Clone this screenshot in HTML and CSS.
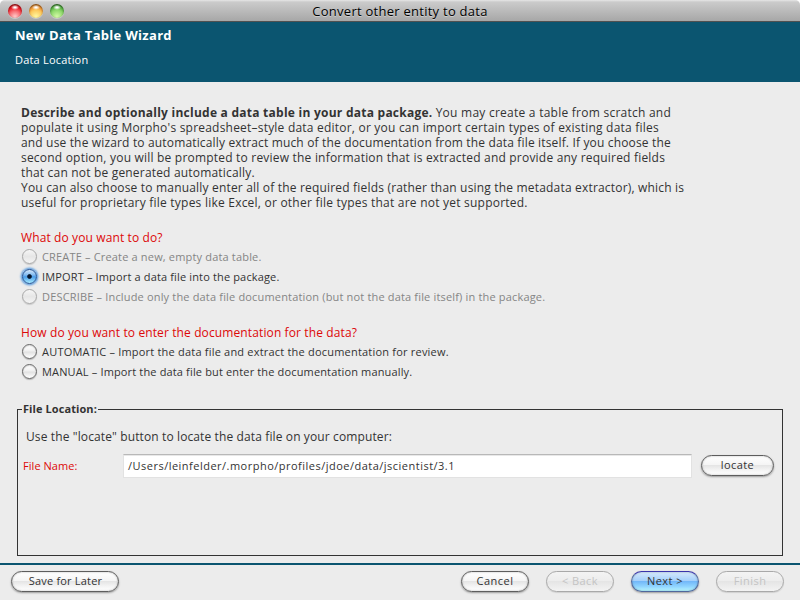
FILE: index.html
```html
<!DOCTYPE html>
<html lang="en">
<head>
<meta charset="utf-8">
<title>Convert other entity to data</title>
<link rel="stylesheet" href="styles.css">
</head>
<body>
<div class="window">
  <div class="titlebar">
    <div class="lights"><span class="light red"></span><span class="light amber"></span><span class="light green"></span></div>
    <div class="title">Convert other entity to data</div>
  </div>
  <header class="banner">
    <h1>New Data Table Wizard</h1>
    <p>Data Location</p>
  </header>
  <main class="content">
    <div class="intro">
      <div><b class="t26">Describe and optionally include a data table in your data package.</b> <span class="t26">You may create a table from scratch and</span></div>
      <div class="t22">populate it using Morpho's spreadsheet–style data editor, or you can import certain types of existing data files</div>
      <div class="t17">and use the wizard to automatically extract much of the documentation from the data file itself. If you choose the</div>
      <div class="t21">second option, you will be prompted to review the information that is extracted and provide any required fields</div>
      <div class="t19">that can not be generated automatically.</div>
      <div class="t19">You can also choose to manually enter all of the required fields (rather than using the metadata extractor), which is</div>
      <div class="t24">useful for proprietary file types like Excel, or other file types that are not yet supported.</div>
    </div>
    <section class="group">
      <h2>What do you want to do?</h2>
      <div class="option off"><span class="radio"></span><span class="t17">CREATE – Create a new, empty data table.</span></div>
      <div class="option"><span class="radio on"></span><span class="t15">IMPORT – Import a data file into the package.</span></div>
      <div class="option off"><span class="radio"></span><span class="t17">DESCRIBE – Include only the data file documentation (but not the data file itself) in the package.</span></div>
    </section>
    <section class="group">
      <h2>How do you want to enter the documentation for the data?</h2>
      <div class="option"><span class="radio"></span><span class="t21">AUTOMATIC – Import the data file and extract the documentation for review.</span></div>
      <div class="option"><span class="radio"></span><span class="t15">MANUAL – Import the data file but enter the documentation manually.</span></div>
    </section>
    <fieldset class="location">
      <legend>File Location:</legend>
      <p class="hint">Use the "locate" button to locate the data file on your computer:</p>
      <div class="file-row">
        <span class="label">File Name:</span>
        <span class="input">/Users/leinfelder/.morpho/profiles/jdoe/data/jscientist/3.1</span>
        <span class="btn locate">locate</span>
      </div>
    </fieldset>
  </main>
  <footer class="footer">
    <span class="btn save">Save for Later</span>
    <span class="btn">Cancel</span>
    <span class="btn disabled">&lt; Back</span>
    <span class="btn primary">Next &gt;</span>
    <span class="btn disabled">Finish</span>
  </footer>
</div>
</body>
</html>
```
FILE: styles.css
```css
* { box-sizing: border-box; }
html { background: #fff; }
body {
  margin: 0;
  font-family: "Open Sans", "Noto Sans", sans-serif;
  font-size: 11px;
  color: #333;
}
h1, h2, p { margin: 0; font-weight: 400; }

.t15 { letter-spacing: 0.15px; }
.t17 { letter-spacing: 0.17px; }
.intro .t17 { letter-spacing: 0.158px; }
.t19 { letter-spacing: 0.184px; }
.t21 { letter-spacing: 0.205px; }
.t22 { letter-spacing: 0.212px; }
.t24 { letter-spacing: 0.225px; }
.t26 { letter-spacing: 0.248px; }

.window {
  width: 800px;
  height: 600px;
  display: flex;
  flex-direction: column;
  background: #ececec;
  border-radius: 5px 5px 0 0;
  overflow: hidden;
  white-space: nowrap;
}

.titlebar {
  height: 22px;
  display: grid;
  grid-template-columns: 1fr auto 1fr;
  align-items: center;
  background: linear-gradient(#e6e6e6 0, #cbcbcb 2px, #a7a7a7 100%);
  border-bottom: 1px solid #515151;
}
.lights { display: flex; gap: 7px; padding-left: 8px; }
.light {
  width: 14px;
  height: 14px;
  border-radius: 50%;
  box-shadow: 0 1px 0 rgba(255, 255, 255, .35), inset 0 1px 2px rgba(0, 0, 0, .45);
}
.red { background: radial-gradient(ellipse 4px 2.5px at 50% 24%, #fff 20%, transparent), radial-gradient(circle at 50% 90%, #ffc0c0 5%, #f86a70 40%, #ec1822 65%, #a81c1c 100%); }
.amber { background: radial-gradient(ellipse 4px 2.5px at 50% 24%, #fff 20%, transparent), radial-gradient(circle at 50% 90%, #fff49a 5%, #fdc95c 45%, #f39a38 65%, #a55a18 100%); }
.green { background: radial-gradient(ellipse 4px 2.5px at 50% 24%, #fff 20%, transparent), radial-gradient(circle at 50% 90%, #cdf7a0 5%, #8fd96c 45%, #5fb849 65%, #2c7024 100%); }
.title {
  font-size: 13px;
  line-height: 20px;
  letter-spacing: 0.26px;
  color: #000;
  text-shadow: 0 1px 0 rgba(255, 255, 255, .4);
}

.banner {
  height: 60px;
  padding: 4px 15px;
  background: #0b5570;
  color: #fff;
}
.banner h1 { font-size: 13px; font-weight: 700; line-height: 19px; letter-spacing: 0.3px; }
.banner p { margin-top: 7px; line-height: 16px; letter-spacing: 0.2px; }

.content { height: 481px; padding: 23px 17px 0; }
.intro { padding-left: 4px; font-size: 12px; line-height: 15px; }
.group { margin-top: 19px; padding-left: 4px; }
.group h2 { font-size: 12px; line-height: 17px; height: 17px; color: #dd0808; letter-spacing: 0.115px; }
.group + .group { margin-top: 18px; }
.option { display: flex; align-items: center; gap: 5.5px; height: 20px; padding-left: 0.5px; }
.option.off { color: #858585; }
.radio {
  width: 15px;
  height: 15px;
  border-radius: 50%;
  border: 1px solid #666;
  background: linear-gradient(#fff 0, #f3f3f3 40%, #e2e2e2 55%, #fff 100%);
  box-shadow: 0 1px 1px rgba(0, 0, 0, .25), inset 0 1px 1px rgba(0, 0, 0, .15);
}
.off .radio { border-color: #a8a8a8; background: linear-gradient(#f6f6f6, #e6e6e6 50%, #f4f4f4); box-shadow: 0 1px 1px rgba(0, 0, 0, .15); }
.radio.on {
  border-color: #1c4f96;
  background: radial-gradient(circle at 50% 50%, #06162c 1.8px, transparent 2.8px), linear-gradient(#d5e8fa 0, #7db8f0 40%, #4a9ce8 52%, #a8ecff 100%);
  box-shadow: 0 0 2px 1.5px rgba(70, 145, 220, .8);
}

.location {
  margin: 20px 0 0;
  padding: 0;
  height: 155px;
  border: 1px solid #333;
  min-width: 0;
}
.location legend {
  margin-left: 4px;
  padding: 0 1px;
  font-weight: 700;
  line-height: 16px;
  letter-spacing: 0.08px;
}
.hint { padding: 11px 8px 0; font-size: 12px; line-height: 17px; letter-spacing: 0.12px; }
.file-row { display: flex; align-items: center; height: 24px; margin-top: 9px; padding: 0 8px 0 5px; }
.label { flex: none; width: 100px; margin-top: -2px; color: #dd0808; letter-spacing: 0.05px; }
.input {
  flex: none;
  width: 569px;
  height: 24px;
  padding: 1px 4px 0;
  line-height: 20px;
  letter-spacing: 0.487px;
  background: #fff;
  border: 1px solid #e2e2e2;
  border-top: 1px solid #b8b8b8;
  box-shadow: inset 0 1px 0 #e8e8e8;
}

.btn {
  flex: none;
  width: 68px;
  height: 21px;
  display: flex;
  justify-content: center;
  line-height: 18px;
  letter-spacing: 0.46px;
  border: 1px solid #5d5d5d;
  border-radius: 11px;
  background: linear-gradient(#fff 0, #f5f5f5 45%, #e5e5e5 50%, #f4f4f4 75%, #fff 100%);
  box-shadow: 0 1px 2px rgba(0, 0, 0, .35), inset 0 0 2px rgba(0, 0, 0, .3);
}
.locate { width: 73px; margin-left: 9px; margin-top: -2px; letter-spacing: 0.438px; }
.footer {
  height: 37px;
  display: flex;
  gap: 17px;
  padding: 6px 16px 0 11px;
  border-top: 2px solid #0b5570;
}
.save { width: 108px; margin-right: auto; padding-left: 1px; letter-spacing: 0.2px; }
.disabled {
  color: #c4c4c4;
  border-color: #a9a9a9;
  background: linear-gradient(#f3f3f3 0, #ededed 45%, #e5e5e5 50%, #f3f3f3 100%);
  box-shadow: 0 1px 1px rgba(0, 0, 0, .12);
}
.primary {
  border-color: #50679c;
  border-top-color: #3a34ab;
  background: linear-gradient(#d6e9fc 0, #a5d0fb 45%, #73b8f9 50%, #8ed3ff 75%, #b8f6ff 100%);
}
```
